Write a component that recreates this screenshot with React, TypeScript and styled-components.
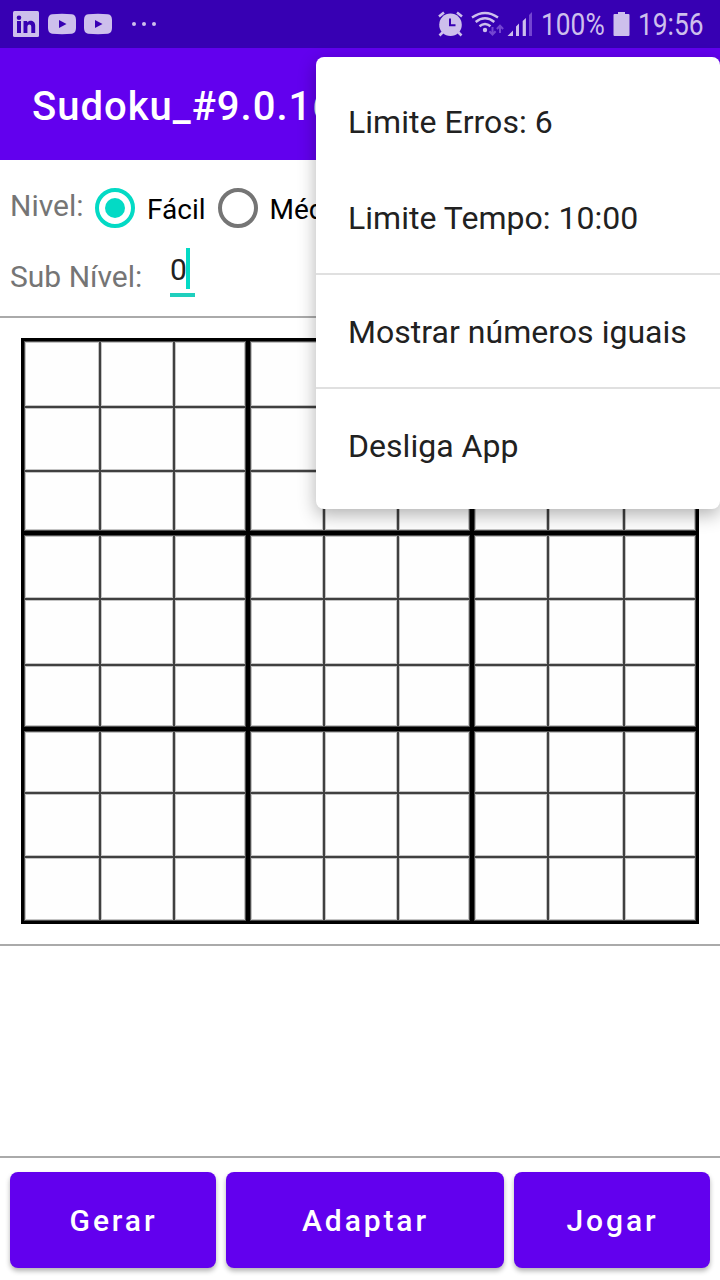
import React from 'react';
import styled, { createGlobalStyle } from 'styled-components';

const Global = createGlobalStyle`
  * { box-sizing: border-box; }
  body { margin: 0; background: #fff; font-family: Roboto, sans-serif; }
`;

const Screen = styled.main`
  position: relative;
  width: 720px;
  height: 1280px;
  overflow: hidden;
  display: flex;
  flex-direction: column;
  background: #fff;
`;

const StatusBar = styled.header`
  flex: none;
  height: 48px;
  display: flex;
  justify-content: space-between;
  background: #3700b3;
  color: #cdbfec;
`;

const StatusText = styled.span<{ $width: number }>`
  width: ${(p) => p.$width}px;
  font-size: 31px;
  line-height: 50px;
  white-space: nowrap;
`;

const StatusGroup = styled.div`
  display: flex;
  svg { display: block; flex: none; }
`;

const Condensed = styled.span`
  display: inline-block;
  transform: scaleX(0.85);
  transform-origin: left center;
`;

const AppBar = styled.div`
  flex: none;
  height: 112px;
  padding: 4px 0 0 32px;
  display: flex;
  align-items: center;
  background: #6200ee;
  color: #fff;
  font-size: 40px;
  font-weight: 500;
  letter-spacing: 1px;
  white-space: nowrap;
`;

const Settings = styled.section`
  flex: none;
  height: 158px;
  padding-left: 10px;
  border-bottom: 2px solid #aaa;
  color: #757575;
  font-size: 30px;
`;

const LevelRow = styled.div`
  display: flex;
  height: 84px;
  padding-top: 28px;
  white-space: nowrap;
`;

const Label = styled.span<{ $width: number }>`
  width: ${(p) => p.$width}px;
  line-height: 35px;
`;

const Radio = styled.span<{ $checked?: boolean }>`
  width: 40px;
  height: 40px;
  display: grid;
  place-items: center;
  border: 4px solid ${(p) => (p.$checked ? '#03dac5' : '#757575')};
  border-radius: 50%;
  &::after {
    content: '';
    width: 20px;
    height: 20px;
    border-radius: 50%;
    background: ${(p) => (p.$checked ? '#03dac5' : 'transparent')};
  }
`;

const RadioLabel = styled.span`
  padding: 5px 12px 0;
  color: #000;
  font-size: 28px;
  line-height: 33px;
`;

const SubLevelRow = styled.div`
  display: flex;
  height: 72px;
`;

const SubLabel = styled(Label)`
  padding-top: 15px;
`;

const Field = styled.span`
  width: 25px;
  height: 53px;
  display: flex;
  border-bottom: 4px solid #1fcfbd;
  color: #212121;
  line-height: 51px;
`;

const Caret = styled.i`
  width: 4px;
  height: 41px;
  margin: 4px 0 0 -1px;
  background: #03dac5;
`;

const BoardArea = styled.section`
  flex: none;
  height: 628px;
  padding: 20px 21px;
  border-bottom: 2px solid #aaa;
`;

const Board = styled.div`
  width: 678px;
  height: 586px;
  border: 3px solid #000;
  display: grid;
  grid-template-columns: 222px 220px 222px;
  grid-template-rows: 190px 192px 190px;
  gap: 4px;
  background: #000;
`;

const Block = styled.div<{ $columns: string; $rows: string }>`
  display: grid;
  grid-template-columns: ${(p) => p.$columns};
  grid-template-rows: ${(p) => p.$rows};
  gap: 2px;
  border: 1px solid #505050;
  background: #404040;
`;

const Cell = styled.div`
  border: 1px solid #c4c4c4;
  background: #fefefe;
`;

const Empty = styled.div`
  flex: 1;
  border-bottom: 2px solid #aaa;
`;

const Actions = styled.footer`
  flex: none;
  height: 122px;
  padding: 14px 10px 12px;
  display: grid;
  grid-template-columns: 206px 278px 196px;
  gap: 10px;
`;

const Button = styled.button`
  border: 0;
  padding: 0 0 0 1px;
  border-radius: 8px;
  background: #6200ee;
  color: #fff;
  font: 500 30px Roboto, sans-serif;
  letter-spacing: 2.9px;
  box-shadow: 0 3px 5px rgba(0, 0, 0, 0.3);
`;

const Menu = styled.nav`
  position: absolute;
  top: 57px;
  left: 316px;
  width: 404px;
  height: 452px;
  padding: 16px 0;
  border-radius: 8px;
  background: #fff;
  box-shadow: 0 6px 18px rgba(0, 0, 0, 0.3);
`;

const MenuItem = styled.div<{ $divided?: boolean }>`
  height: ${(p) => (p.$divided ? 114 : 96)}px;
  padding: ${(p) => (p.$divided ? 8 : 0)}px 0 0 32px;
  border-top: ${(p) => (p.$divided ? '2px solid #e0e0e0' : '0')};
  color: #212121;
  font-size: 32px;
  letter-spacing: 0.03px;
  line-height: 98px;
  white-space: nowrap;
`;

const MenuGroup = styled.div`
  height: 200px;
`;

const BLOCK_COLUMNS = ['74px 72px 70px', '72px 72px 70px', '72px 74px 70px'];
const BLOCK_ROWS = ['64px 62px 58px', '62px 64px 60px', '60px 62px 62px'];

const Notifications = () => (
  <svg width="170" height="48" fill="#cdbfec">
    <rect x="13" y="11" width="26" height="26" rx="1.5" />
    <g fill="#3700b3">
      <circle cx="19" cy="17.8" r="2.3" />
      <rect x="17" y="21" width="4" height="12" />
      <path d="M23.5 21h3.7v1.6c2-3 8-2.5 8 3V33h-3.9v-6c0-3.3-3.9-3.2-3.9 0v6h-3.9z" />
    </g>
    {[48, 84].map((x) => (
      <g key={x}>
        <path d={`M${x + 4} 14.3Q${x + 14} 13.4 ${x + 24} 14.3Q${x + 28} 15 ${x + 28} 20V28Q${x + 28} 33 ${x + 24} 33.7Q${x + 14} 34.6 ${x + 4} 33.7Q${x} 33 ${x} 28V20Q${x} 15 ${x + 4} 14.3z`} />
        <path d={`M${x + 11} 20l7.5 4-7.5 4z`} fill="#3700b3" />
      </g>
    ))}
    <circle cx="134" cy="24" r="2" />
    <circle cx="144" cy="24" r="2" />
    <circle cx="154" cy="24" r="2" />
  </svg>
);

const Connectivity = () => (
  <svg width="103" height="48" fill="#cdbfec">
    <circle cx="12.5" cy="24.7" r="11.3" />
    <g fill="none" stroke="#cdbfec" strokeWidth="2.6">
      <path d="M1 16.5l5-4M24 16.5l-5-4M5 32l-3.5 3.5M20 32l3.5 3.5" />
    </g>
    <path d="M12 18.5v6.7h5.5" fill="none" stroke="#3700b3" strokeWidth="2" />
    <g fill="none" stroke="#cdbfec" strokeWidth="2.4">
      <path d="M34 17.5Q47 8.5 60 17.5M37.7 22Q47 14.5 56.3 22M41.5 26.3Q47 21.8 52.5 26.3" />
    </g>
    <circle cx="47" cy="30" r="2.2" />
    <g fill="none" stroke="#7445d1" strokeWidth="2">
      <path d="M54.5 27v7.5M51.4 31.2l3.1 3.3 3.1-3.3M62 33v-7.5M58.9 29l3.1-3.3 3.1 3.3" />
    </g>
    <path d="M69.5 36l5.5-5.5V36zM78 36v-9.5l3-3V36zM84.7 36V21l3.2-3V36z" />
    <path d="M91 36V15l3-3v24z" fill="#7445d1" />
  </svg>
);

const Battery = () => (
  <svg width="25" height="48" fill="#cdbfec">
    <path d="M5 12h7v2h3.5q1 0 1 1v20q0 1-1 1h-14q-1 0-1-1V15q0-1 1-1H5z" />
  </svg>
);

export default function App() {
  return (
    <>
      <Global />
      <Screen>
        <StatusBar>
          <Notifications />
          <StatusGroup>
            <Connectivity />
            <StatusText $width={72}><Condensed>100%</Condensed></StatusText>
            <Battery />
            <StatusText $width={82}><Condensed>19:56</Condensed></StatusText>
          </StatusGroup>
        </StatusBar>
        <AppBar>Sudoku_#9.0.16</AppBar>
        <Settings>
          <LevelRow>
            <Label $width={85}>Nivel:</Label>
            <Radio $checked />
            <RadioLabel>Fácil</RadioLabel>
            <Radio />
            <RadioLabel>Médio</RadioLabel>
          </LevelRow>
          <SubLevelRow>
            <SubLabel $width={160}>Sub Nível:</SubLabel>
            <Field>0<Caret /></Field>
          </SubLevelRow>
        </Settings>
        <BoardArea>
          <Board>
            {BLOCK_ROWS.map((rows) =>
              BLOCK_COLUMNS.map((columns) => (
                <Block key={rows + columns} $rows={rows} $columns={columns}>
                  {Array.from({ length: 9 }, (_, i) => (
                    <Cell key={i} />
                  ))}
                </Block>
              )),
            )}
          </Board>
        </BoardArea>
        <Empty />
        <Actions>
          <Button>Gerar</Button>
          <Button>Adaptar</Button>
          <Button>Jogar</Button>
        </Actions>
        <Menu>
          <MenuGroup>
            <MenuItem>Limite Erros: 6</MenuItem>
            <MenuItem>Limite Tempo: 10:00</MenuItem>
          </MenuGroup>
          <MenuItem $divided>Mostrar números iguais</MenuItem>
          <MenuItem $divided>Desliga App</MenuItem>
        </Menu>
      </Screen>
    </>
  );
}
